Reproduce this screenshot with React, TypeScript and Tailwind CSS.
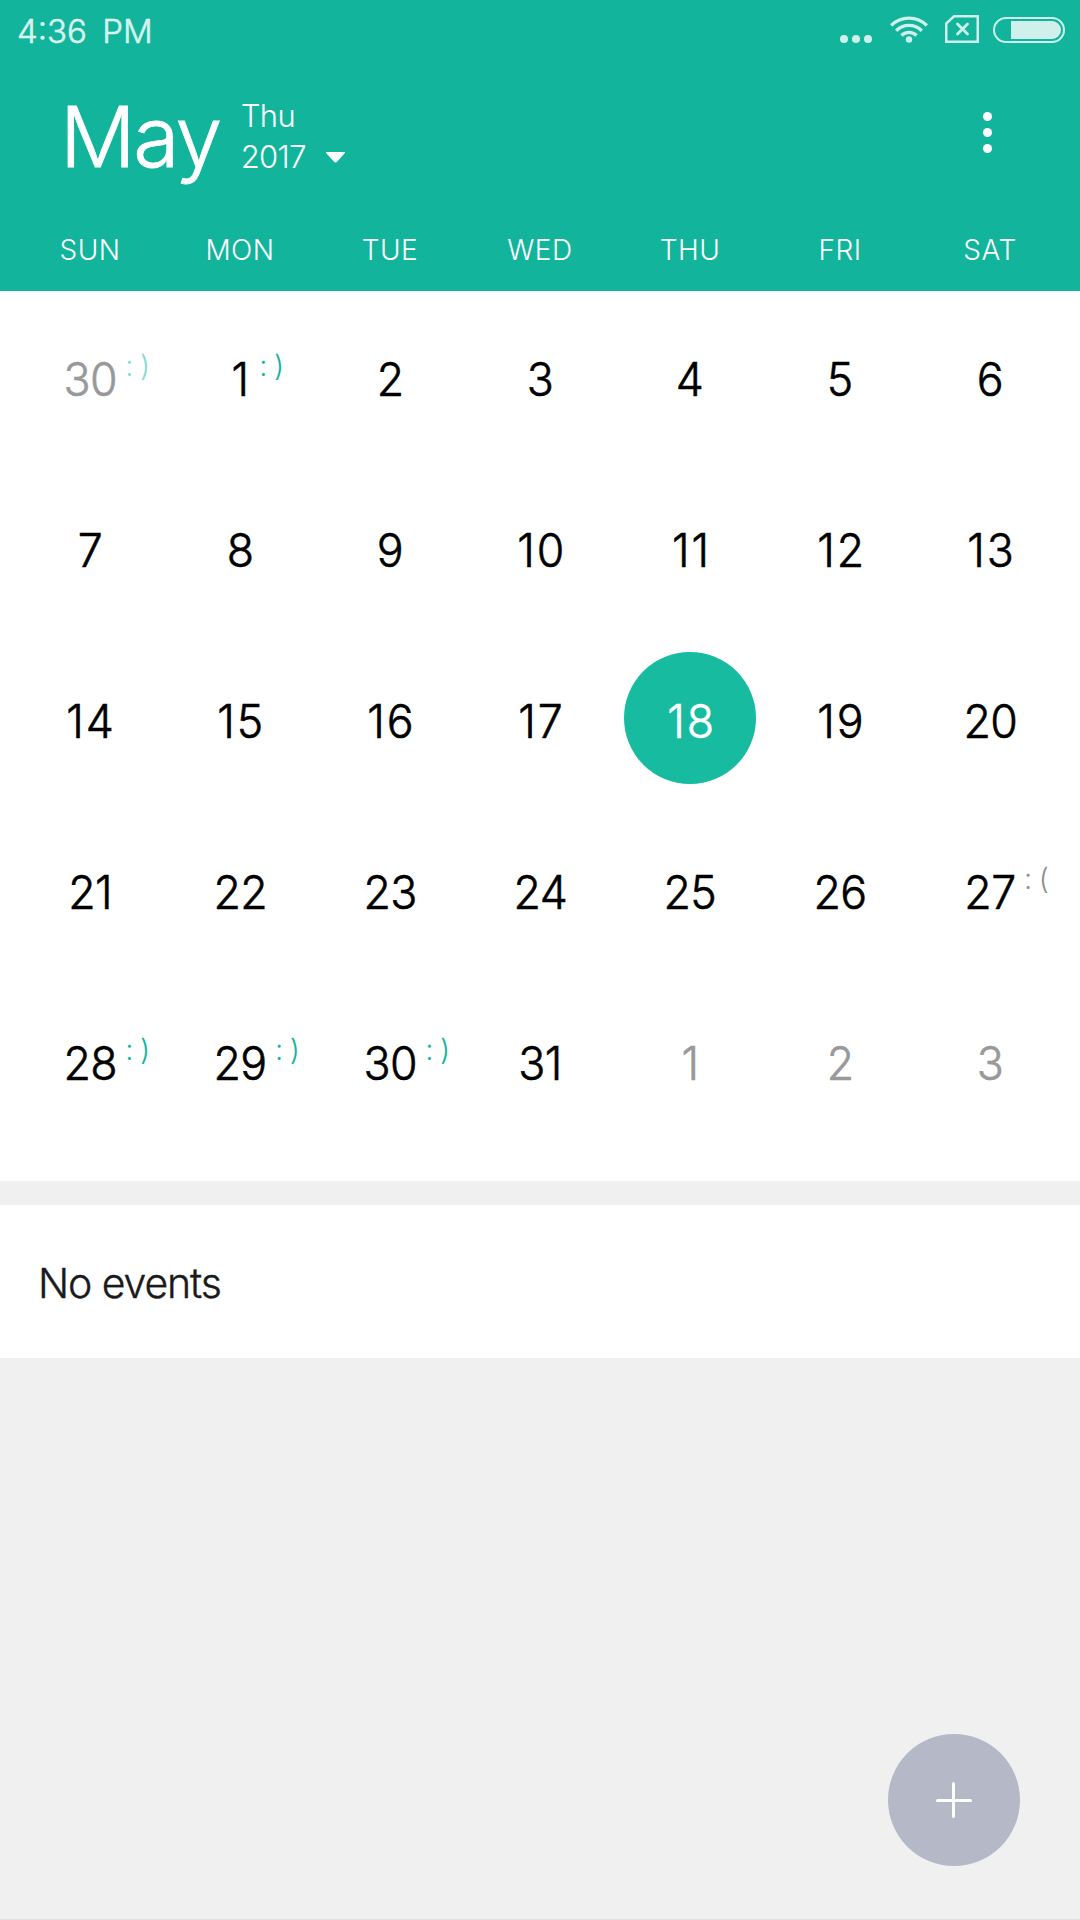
import { clsx } from "clsx";

type Mood = "happy" | "sad";

type Day = {
  date: number;
  outside?: boolean;
  selected?: boolean;
  mood?: Mood;
};

const WEEKDAYS = ["SUN", "MON", "TUE", "WED", "THU", "FRI", "SAT"];

const MOODS: Record<number, Mood> = {
  1: "happy",
  27: "sad",
  28: "happy",
  29: "happy",
  30: "happy",
};

const DAYS: Day[] = [
  { date: 30, outside: true, mood: "happy" },
  ...Array.from({ length: 31 }, (_, i) => ({
    date: i + 1,
    selected: i + 1 === 18,
    mood: MOODS[i + 1],
  })),
  { date: 1, outside: true },
  { date: 2, outside: true },
  { date: 3, outside: true },
];

function WifiIcon() {
  return (
    <svg width="38" height="28" viewBox="0 0 38 28" fill="none" stroke="currentColor" strokeWidth="3.4">
      <path d="M1.2 10.5a25.2 25.2 0 0 1 35.6 0" />
      <path d="M6.2 15.7a18.1 18.1 0 0 1 25.6 0" />
      <path d="M11.4 20.5a10.8 10.8 0 0 1 15.2 0" />
      <circle cx="19" cy="24.5" r="3.2" fill="currentColor" stroke="none" />
    </svg>
  );
}

function NoSimIcon() {
  return (
    <svg width="34" height="28" viewBox="0 0 34 28" fill="none" stroke="currentColor">
      <path d="M9 1.25h23.75v25.5H1.25V8.5z" strokeWidth="2.5" />
      <path d="M12.5 9l10 10M22.5 9l-10 10" strokeWidth="2.8" strokeLinecap="round" />
    </svg>
  );
}

function StatusBar() {
  return (
    <div className="flex h-[60px] items-start justify-between pl-[17px] pr-[15px] text-white/80">
      <div className="mt-[7px] text-[33px] leading-[48px] [word-spacing:6px] [-webkit-text-stroke:0.5px]">4:36 PM</div>
      <div className="mt-[15px] flex h-7 items-start">
        <div className="mr-[18px] mt-5 flex gap-1">
          <span className="size-2 rounded-full bg-current" />
          <span className="size-2 rounded-full bg-current" />
          <span className="size-2 rounded-full bg-current" />
        </div>
        <WifiIcon />
        <div className="ml-[17px] mr-3.5">
          <NoSimIcon />
        </div>
        <div className="mt-0.5 flex h-[26px] w-[72px] justify-end rounded-full border-2 border-current p-0.5">
          <div className="w-[50px] rounded-r-full bg-current" />
        </div>
      </div>
    </div>
  );
}

function Header() {
  return (
    <header className="flex h-[231px] flex-col text-white">
      <div className="flex h-[150px] items-start justify-between pl-[60px] pr-[88px]">
        <div className="flex items-start">
          <h1 className="mt-[25px] text-[84px] leading-[104px] tracking-[-2.5px] [-webkit-text-stroke:0.8px]">May</h1>
          <div className="ml-[21px] mt-[35px] text-[31px] leading-[41px]">
            <div className="tracking-[-0.6px]">Thu</div>
            <div className="flex items-center">
              <span className="tracking-[-0.6px]">2017</span>
              <svg className="ml-[19px] mt-[2px]" width="21" height="12" viewBox="0 0 21 12" fill="currentColor">
                <path d="M1.5 0h18q1.2 0 .4 1L12 9.8q-1.5 1.6-3 0L1.1 1q-.8-1 .4-1z" />
              </svg>
            </div>
          </div>
        </div>
        <button className="mt-[52px] flex flex-col gap-[7px]">
          <span className="size-[9px] rounded-full bg-white" />
          <span className="size-[9px] rounded-full bg-white" />
          <span className="size-[9px] rounded-full bg-white" />
        </button>
      </div>
      <div className="grid grid-cols-7 px-[15px] pt-[20px] text-center text-[28px] leading-10 tracking-[0.5px]">
        {WEEKDAYS.map((name) => (
          <div key={name}>{name}</div>
        ))}
      </div>
    </header>
  );
}

function DayCell({ day }: { day: Day }) {
  return (
    <div className="flex h-[171px] items-center justify-center pb-0.5">
      <div
        className={clsx(
          "flex size-[132px] items-center justify-center rounded-full",
          day.selected && "bg-[#17bba0] text-white",
          day.outside && "text-[#999]"
        )}
      >
        <div className="relative pt-[6px]">
          <div
            className={clsx(
              "scale-x-95 text-[47px] leading-[56px] [-webkit-text-stroke:0.6px]",
              day.date >= 10 && day.date < 20 && "-mr-[3px] tracking-[2px]",
              day.date >= 20 && "tracking-[-0.5px]"
            )}
          >
            {day.date}
          </div>
          {day.mood && (
            <span
              className={clsx(
                "absolute left-full top-[5px] whitespace-nowrap text-[29px] leading-8 tracking-[6.5px]",
                day.date < 10 ? "ml-[10px]" : "ml-[7px]",
                day.mood === "sad" ? "text-[#8f8f8f]" : "text-[#12b59b]",
                day.outside && "opacity-50"
              )}
            >
              {day.mood === "sad" ? ":(" : ":)"}
            </span>
          )}
        </div>
      </div>
    </div>
  );
}

export default function App() {
  return (
    <div className="relative flex h-[1920px] w-[1080px] flex-col overflow-hidden border-b border-[#e0e0e0] bg-[#f0f0f0] font-['Inter',sans-serif] font-light">
      <div className="bg-[#12b59b]">
        <StatusBar />
        <Header />
      </div>

      <main className="grid h-[890px] grid-cols-7 content-start bg-white px-[15px] text-black">
        {DAYS.map((day, i) => (
          <DayCell key={i} day={day} />
        ))}
      </main>

      <section className="mt-6 flex h-[153px] items-center bg-white pl-[38px] pt-1 text-[41px] tracking-[-1.1px] text-[#1a1a1a] [-webkit-text-stroke:0.4px]">
        No events
      </section>

      {/* Floating add button */}
      <button className="absolute bottom-[53px] right-[60px] flex size-[132px] items-center justify-center rounded-full bg-[#b5b9c7]">
        <svg width="36" height="36" viewBox="0 0 36 36" stroke="white" strokeWidth="3" strokeLinecap="round">
          <path d="M17.5 1.5v33M1.5 18.5h33" />
        </svg>
      </button>
    </div>
  );
}
